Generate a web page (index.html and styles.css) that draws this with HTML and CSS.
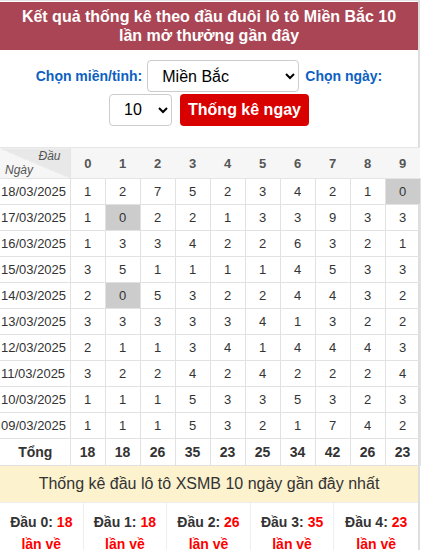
FILE: index.html
```html
<!DOCTYPE html>
<html lang="vi">
<head>
<meta charset="utf-8">
<link rel="stylesheet" href="styles.css">
</head>
<body>
<div class="wrap">
  <h2 class="title">Kết quả thống kê theo đầu đuôi lô tô Miền Bắc 10 lần mở thưởng gần đây</h2>
  <div class="form">
    <div class="row">
      <label class="lbl">Chọn miền/tỉnh:</label>
      <select class="sel sel-region"><option>Miền Bắc</option></select>
      <label class="lbl">Chọn ngày:</label>
    </div>
    <div class="row">
      <select class="sel sel-days"><option>10</option></select>
      <button class="btn">Thống kê ngay</button>
    </div>
  </div>
  <table class="stats">
    <colgroup>
      <col class="c-date"><col><col><col><col><col><col><col><col><col><col>
    </colgroup>
    <thead>
      <tr>
        <th class="corner"><span class="dau">Đầu</span><span class="ngay">Ngày</span></th>
        <th>0</th><th>1</th><th>2</th><th>3</th><th>4</th><th>5</th><th>6</th><th>7</th><th>8</th><th>9</th>
      </tr>
    </thead>
    <tbody>
      <tr><td class="d">18/03/2025</td><td>1</td><td>2</td><td>7</td><td>5</td><td>2</td><td>3</td><td>4</td><td>2</td><td>1</td><td class="z">0</td></tr>
      <tr><td class="d">17/03/2025</td><td>1</td><td class="z">0</td><td>2</td><td>2</td><td>1</td><td>3</td><td>3</td><td>9</td><td>3</td><td>3</td></tr>
      <tr><td class="d">16/03/2025</td><td>1</td><td>3</td><td>3</td><td>4</td><td>2</td><td>2</td><td>6</td><td>3</td><td>2</td><td>1</td></tr>
      <tr><td class="d">15/03/2025</td><td>3</td><td>5</td><td>1</td><td>1</td><td>1</td><td>1</td><td>4</td><td>5</td><td>3</td><td>3</td></tr>
      <tr><td class="d">14/03/2025</td><td>2</td><td class="z">0</td><td>5</td><td>3</td><td>2</td><td>2</td><td>4</td><td>4</td><td>3</td><td>2</td></tr>
      <tr><td class="d">13/03/2025</td><td>3</td><td>3</td><td>3</td><td>3</td><td>3</td><td>4</td><td>1</td><td>3</td><td>2</td><td>2</td></tr>
      <tr><td class="d">12/03/2025</td><td>2</td><td>1</td><td>1</td><td>3</td><td>4</td><td>1</td><td>4</td><td>4</td><td>4</td><td>3</td></tr>
      <tr><td class="d">11/03/2025</td><td>3</td><td>2</td><td>2</td><td>4</td><td>2</td><td>4</td><td>2</td><td>2</td><td>2</td><td>4</td></tr>
      <tr><td class="d">10/03/2025</td><td>1</td><td>1</td><td>1</td><td>5</td><td>3</td><td>3</td><td>5</td><td>3</td><td>2</td><td>3</td></tr>
      <tr><td class="d">09/03/2025</td><td>1</td><td>1</td><td>1</td><td>5</td><td>3</td><td>2</td><td>1</td><td>7</td><td>4</td><td>2</td></tr>
      <tr class="total"><td class="d">Tổng</td><td>18</td><td>18</td><td>26</td><td>35</td><td>23</td><td>25</td><td>34</td><td>42</td><td>26</td><td>23</td></tr>
    </tbody>
  </table>
  <div class="band">Thống kê đầu lô tô XSMB 10 ngày gần đây nhất</div>
  <div class="boxes">
    <div class="box"><span class="k">Đầu 0: <span class="red">18</span></span><span class="red v">lần về</span></div>
    <div class="box"><span class="k">Đầu 1: <span class="red">18</span></span><span class="red v">lần về</span></div>
    <div class="box"><span class="k">Đầu 2: <span class="red">26</span></span><span class="red v">lần về</span></div>
    <div class="box"><span class="k">Đầu 3: <span class="red">35</span></span><span class="red v">lần về</span></div>
    <div class="box"><span class="k">Đầu 4: <span class="red">23</span></span><span class="red v">lần về</span></div>
  </div>
</div>
</body>
</html>
```
FILE: styles.css
```css
html, body {
  margin: 0;
  padding: 0;
  background: #fff;
}
body {
  font-family: "Liberation Sans", Arial, sans-serif;
  color: #333;
}
.wrap {
  width: 418px;
  border-top: 1px solid #e4e4e4;
  border-right: 2px solid #dedede;
  min-height: 560px;
}
.title {
  margin: 0;
  margin-top: 1px;
  background: #a94554;
  color: #fff;
  font-size: 16px;
  font-weight: bold;
  line-height: 19px;
  text-align: center;
  padding: 5px 20px 5px;
  height: 38px;
}
.form {
  padding-top: 10px;
  display: flex;
  flex-direction: column;
  align-items: center;
}
.row {
  display: flex;
  align-items: center;
  justify-content: center;
}
.lbl {
  color: #0d5fc2;
  font-weight: bold;
  font-size: 14px;
}
.sel {
  font-family: "Liberation Sans", Arial, sans-serif;
  font-size: 16px;
  color: #000;
  background: #fff;
  border: 1px solid #ccc;
  border-radius: 4px;
  height: 32px;
  padding: 0 6px 0 10px;
}
.sel-region {
  width: 152px;
  margin: 0 6px 0 5px;
}
.sel-days {
  width: 63px;
  margin-right: 8px;
  margin-top: 1px;
}
.btn {
  background: #d90000;
  color: #fff;
  border: none;
  border-radius: 4px;
  font-family: "Liberation Sans", Arial, sans-serif;
  font-weight: bold;
  font-size: 16px;
  width: 129px;
  height: 32px;
  padding: 0;
  margin-top: 2px;
}
.stats {
  margin-top: 21px;
  width: 420px;
  border-collapse: collapse;
  table-layout: fixed;
  font-size: 13px;
  color: #333;
}
.stats col { width: 35px; }
.stats col.c-date { width: 70px; }
.stats th {
  background: #f6f6f6;
  height: 30px;
  font-weight: bold;
  color: #555;
  border-top: 1px solid #e5e5e5;
  border-bottom: 1px solid #e5e5e5;
  padding: 0;
  text-align: center;
}
.stats th.corner {
  position: relative;
  background: linear-gradient(to bottom left, #e8e8e8 50%, #f6f6f6 50%);
  border-right: 1px solid #e5e5e5;
  font-style: italic;
  font-weight: normal;
  color: #555;
  font-size: 12px;
}
.corner .dau {
  position: absolute;
  right: 9px;
  top: 1px;
}
.corner .ngay {
  position: absolute;
  left: 5px;
  bottom: 1px;
}
.stats td {
  height: 25px;
  border: 1px solid #e2e2e2;
  text-align: center;
  padding: 0;
}
.stats td.d {
  text-align: left;
  padding-left: 1px;
  border-left: none;
}
.stats td.z {
  background: #cccccc;
}
.stats tr.total td {
  font-weight: bold;
  font-size: 14px;
  height: 26px;
}
.stats tr.total td.d {
  text-align: center;
  font-size: 14px;
}
.band {
  background: #fcf2ce;
  color: #333;
  text-align: center;
  font-size: 16px;
  height: 36px;
  line-height: 36px;
}
.boxes {
  display: flex;
  border-top: 1px solid #eee;
}
.box {
  width: 84px;
  box-sizing: border-box;
  border-right: 1px solid #eee;
  display: flex;
  flex-direction: column;
  align-items: center;
  font-weight: bold;
  font-size: 14px;
  line-height: 22px;
  padding-top: 8px;
  color: #333;
}
.box:last-child { border-right: none; }
.red { color: #ff0000; }
.k, .v { white-space: nowrap; }
```
